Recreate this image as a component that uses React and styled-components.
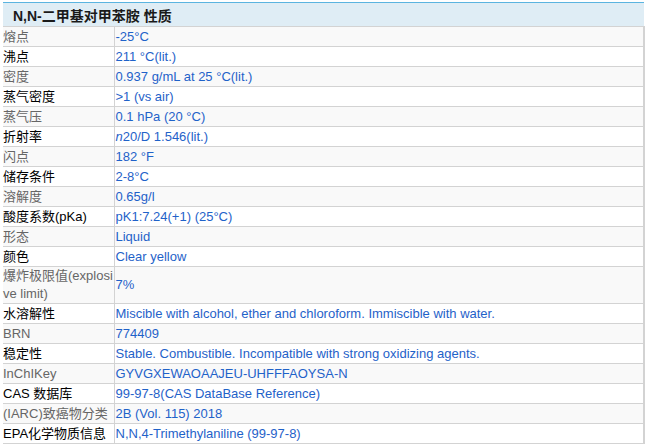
import styled, { createGlobalStyle } from "styled-components";

const GlobalStyle = createGlobalStyle`
  html, body {
    margin: 0;
    padding: 0;
    background: #fff;
  }
  body {
    font-family: "Liberation Sans", Arial, "Noto Sans CJK SC", sans-serif;
  }
`;

const rows = [
  ["熔点", "-25°C"],
  ["沸点", "211 °C(lit.)"],
  ["密度", "0.937 g/mL at 25 °C(lit.)"],
  ["蒸气密度", ">1 (vs air)"],
  ["蒸气压", "0.1 hPa (20 °C)"],
  ["折射率", <><i>n</i>20/D 1.546(lit.)</>],
  ["闪点", "182 °F"],
  ["储存条件", "2-8°C"],
  ["溶解度", "0.65g/l"],
  ["酸度系数(pKa)", "pK1:7.24(+1) (25°C)"],
  ["形态", "Liquid"],
  ["颜色", "Clear yellow"],
  ["爆炸极限值(explosive limit)", "7%"],
  ["水溶解性", "Miscible with alcohol, ether and chloroform. Immiscible with water."],
  ["BRN", "774409"],
  ["稳定性", "Stable. Combustible. Incompatible with strong oxidizing agents."],
  ["InChIKey", "GYVGXEWAOAAJEU-UHFFFAOYSA-N"],
  ["CAS 数据库", "99-97-8(CAS DataBase Reference)"],
  ["(IARC)致癌物分类", "2B (Vol. 115) 2018"],
  ["EPA化学物质信息", "N,N,4-Trimethylaniline (99-97-8)"],
];

export default function App() {
  return (
    <>
      <GlobalStyle />
      <Wrap>
        <Table>
          <colgroup>
            <col style={{ width: 111 }} />
            <col />
          </colgroup>
          <thead>
            <tr>
              <Title colSpan={2}>N,N-二甲基对甲苯胺 性质</Title>
            </tr>
          </thead>
          <tbody>
            {rows.map(([label, value], i) => (
              <Row key={i} $odd={i % 2 === 0}>
                <Label $odd={i % 2 === 0}>{label}</Label>
                <Value>{value}</Value>
              </Row>
            ))}
          </tbody>
        </Table>
      </Wrap>
    </>
  );
}

const Wrap = styled.div`
  padding: 2px 0 0 3px;
`;

const Table = styled.table`
  width: 642px;
  border-collapse: collapse;
  table-layout: fixed;
  font-size: 13px;
`;

const Title = styled.th`
  height: 23px;
  padding: 0 0 0 10px;
  text-align: left;
  font-size: 14px;
  font-weight: bold;
  color: #1a1a1a;
  background: #dfedf5;
  border-top: 1px solid #5ab4e0;
  border-bottom: 1px solid #d3d3d3;
`;

const Row = styled.tr`
  background: ${(p) => (p.$odd ? "#f9f9f9" : "#ffffff")};
`;

const Label = styled.td`
  height: 19px;
  padding: 0;
  line-height: 18px;
  vertical-align: middle;
  color: ${(p) => (p.$odd ? "#666666" : "#000000")};
  word-break: break-all;
  border-right: 1px solid #d3d3d3;
  border-bottom: 1px solid #d3d3d3;
`;

const Value = styled.td`
  height: 19px;
  padding: 0 0 0 1px;
  line-height: 18px;
  vertical-align: middle;
  color: #1f62c9;
  border-right: 2px solid #d3d3d3;
  border-bottom: 1px solid #d3d3d3;
`;
